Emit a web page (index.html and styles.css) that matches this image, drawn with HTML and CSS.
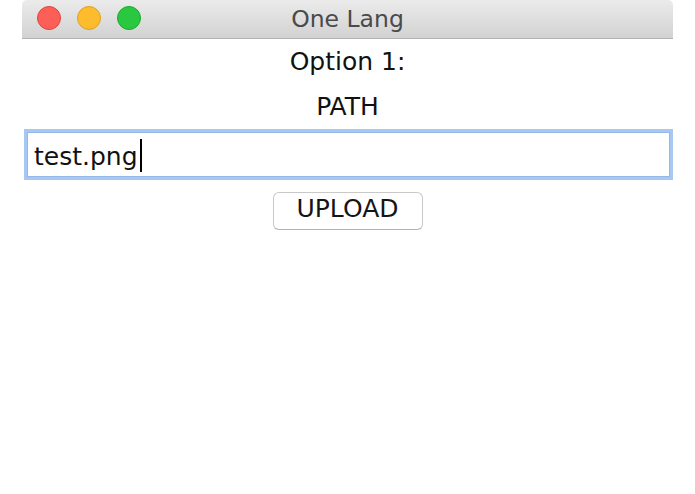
FILE: index.html
```html
<!DOCTYPE html>
<html lang="en">
<head>
<meta charset="utf-8">
<title>One Lang</title>
<link rel="stylesheet" href="styles.css">
</head>
<body>
<div class="window">
  <header class="titlebar">
    <div class="lights">
      <span class="light close"></span>
      <span class="light minimize"></span>
      <span class="light zoom"></span>
    </div>
    <div class="title">One Lang</div>
  </header>
  <main class="content">
    <div class="label option">Option 1:</div>
    <div class="label path">PATH</div>
    <div class="field" role="textbox" aria-label="PATH"><span class="value">test.png</span><span class="caret"></span></div>
    <button class="upload" type="button">UPLOAD</button>
  </main>
</div>
</body>
</html>
```

FILE: styles.css
```css
html, body {
  margin: 0;
  padding: 0;
  background: #ffffff;
}

body {
  font-family: "DejaVu Sans", "Liberation Sans", sans-serif;
  color: #111111;
}

.window {
  margin: 0 22px;
}

.titlebar {
  height: 38px;
  border-bottom: 1px solid #b3b3b3;
  background: linear-gradient(#ebebeb, #d2d2d2);
  border-radius: 5px 5px 0 0;
  display: grid;
  grid-template-columns: 1fr;
  grid-template-rows: 38px;
}

.lights {
  grid-area: 1 / 1;
  display: flex;
  gap: 16px;
  padding: 6px 0 0 15px;
  align-items: flex-start;
}

.light {
  width: 22px;
  height: 22px;
  border-radius: 50%;
  border: 1px solid;
}

.close {
  background: #fc5f57;
  border-color: #e0443e;
}

.minimize {
  background: #fdbc2e;
  border-color: #dea123;
}

.zoom {
  background: #29c840;
  border-color: #1aab29;
}

.title {
  grid-area: 1 / 1;
  text-align: center;
  font-size: 23.5px;
  line-height: 38px;
  color: #4a4a4a;
}

.content {
  display: flex;
  flex-direction: column;
  align-items: center;
  padding-top: 9px;
}

.label {
  font-size: 25px;
  line-height: 28px;
}

.path {
  margin-top: 17px;
}

.field {
  align-self: stretch;
  margin: 11px 3px 0 5px;
  height: 45px;
  box-sizing: border-box;
  border: 1px solid #94b9e6;
  box-shadow: 0 0 0 3px #a7c9f1;
  padding: 10px 6px 0 6px;
  font-size: 25px;
  line-height: 28px;
  display: flex;
  align-items: flex-start;
  background: #ffffff;
}

.caret {
  width: 2px;
  height: 33px;
  background: #000000;
  margin: -4px 0 0 2px;
}

.upload {
  margin-top: 15px;
  width: 150px;
  height: 38px;
  box-sizing: border-box;
  border: 1px solid #c9c9c9;
  border-bottom-color: #b4b4b4;
  border-radius: 6px;
  background: #ffffff;
  font-family: "DejaVu Sans", "Liberation Sans", sans-serif;
  font-size: 25px;
  line-height: 28px;
  padding: 0 0 4px 0;
  color: #151515;
  box-shadow: 0 1px 1px rgba(0,0,0,0.06);
}
```
